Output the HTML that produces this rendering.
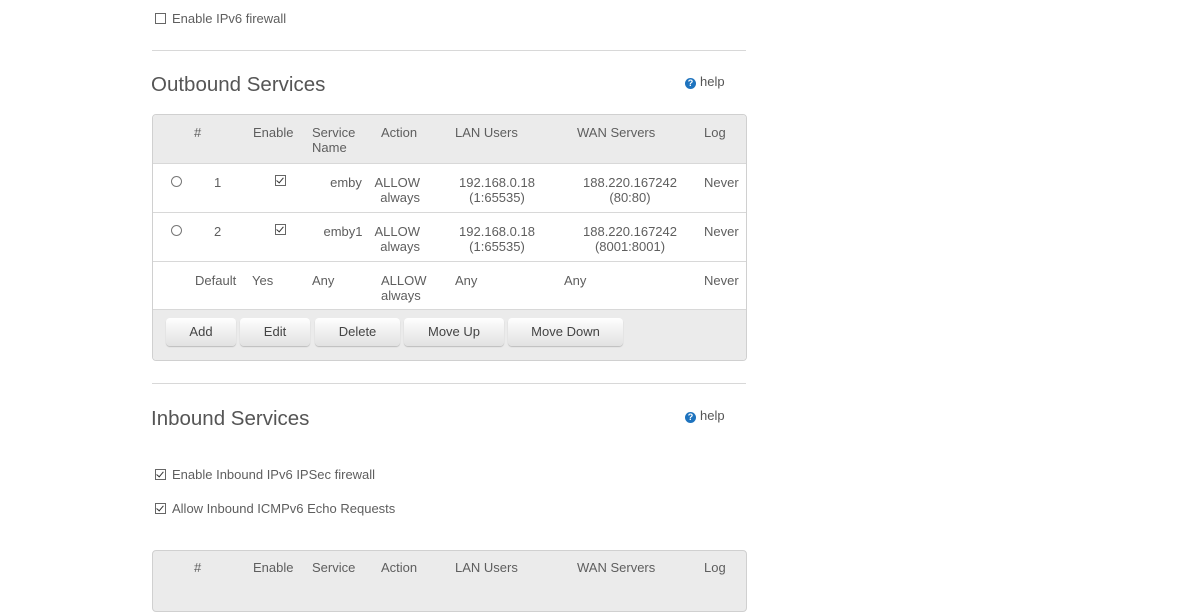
<!DOCTYPE html>
<html><head><style>
body{margin:0;width:1200px;height:573px;background:#fff;font-family:"Liberation Sans",sans-serif;color:#5e5e5e;font-size:13px;position:relative;overflow:hidden}
.t{position:absolute;white-space:nowrap;line-height:15px}
.c{text-align:center}
.r{text-align:right}
.hr{position:absolute;left:152px;width:594px;height:1px;background:#d8d8d8}
.h{position:absolute;font-size:20.5px;color:#555;white-space:nowrap}
.cb{position:absolute;width:9px;height:9px;border:1px solid #666;background:#fff}
.cb.k::after{content:"";position:absolute;left:2px;top:0px;width:3px;height:6px;border:solid #333;border-width:0 1.3px 1.3px 0;transform:rotate(40deg)}
.rd{position:absolute;width:9px;height:9px;border:1px solid #777;border-radius:50%}
.help{position:absolute;font-size:13px;color:#555}
.help i{display:inline-block;width:11px;height:11px;border-radius:50%;background:#1e73be;color:#fff;font-size:9px;font-style:normal;font-weight:bold;text-align:center;line-height:11px;margin-right:4px;vertical-align:0}
.box{position:absolute;left:152px;width:593px;border:1px solid #d0d0d0;border-radius:4px;overflow:hidden;background:#fff}
.gray{position:absolute;left:0;right:0;background:#ebebeb}
.line{position:absolute;left:0;right:0;height:1px;background:#d8d8d8}
.btn{position:absolute;top:318px;height:28px;border-radius:4px;background:linear-gradient(#fff,#f2f2f2 40%,#e2e2e2);box-shadow:0 1px 1px #bbb;font-size:13px;color:#444;text-align:center;line-height:28px}
</style></head><body>

<div class="cb" style="left:155px;top:13px"></div>
<span class="t" style="left:172px;top:11px">Enable IPv6 firewall</span>
<div class="hr" style="top:50px"></div>

<div class="h" style="left:151px;top:73px">Outbound Services</div>
<div class="help" style="left:685px;top:74px"><i>?</i>help</div>

<div class="box" style="top:114px;height:245px">
  <div class="gray" style="top:0;height:48px"></div>
  <div class="line" style="top:48px"></div>
  <div class="line" style="top:97px"></div>
  <div class="line" style="top:146px"></div>
  <div class="gray" style="top:194px;height:52px;border-top:1px solid #d8d8d8"></div>
</div>

<span class="t" style="left:194px;top:125px">#</span>
<span class="t" style="left:253px;top:125px">Enable</span>
<span class="t" style="left:312px;top:125px">Service<br>Name</span>
<span class="t" style="left:381px;top:125px">Action</span>
<span class="t" style="left:455px;top:125px">LAN Users</span>
<span class="t" style="left:577px;top:125px">WAN Servers</span>
<span class="t" style="left:704px;top:125px">Log</span>

<div class="rd" style="left:171px;top:176px"></div>
<span class="t" style="left:214px;top:175px">1</span>
<div class="cb k" style="left:275px;top:175px"></div>
<span class="t c" style="left:316px;width:60px;top:175px">emby</span>
<span class="t r" style="left:360px;width:60px;top:175px">ALLOW<br>always</span>
<span class="t c" style="left:447px;width:100px;top:175px">192.168.0.18<br>(1:65535)</span>
<span class="t c" style="left:570px;width:120px;top:175px">188.220.167242<br>(80:80)</span>
<span class="t" style="left:704px;top:175px">Never</span>

<div class="rd" style="left:171px;top:225px"></div>
<span class="t" style="left:214px;top:224px">2</span>
<div class="cb k" style="left:275px;top:224px"></div>
<span class="t c" style="left:313px;width:60px;top:224px">emby1</span>
<span class="t r" style="left:360px;width:60px;top:224px">ALLOW<br>always</span>
<span class="t c" style="left:447px;width:100px;top:224px">192.168.0.18<br>(1:65535)</span>
<span class="t c" style="left:570px;width:120px;top:224px">188.220.167242<br>(8001:8001)</span>
<span class="t" style="left:704px;top:224px">Never</span>

<span class="t" style="left:195px;top:273px">Default</span>
<span class="t" style="left:252px;top:273px">Yes</span>
<span class="t" style="left:312px;top:273px">Any</span>
<span class="t" style="left:381px;top:273px">ALLOW<br>always</span>
<span class="t" style="left:455px;top:273px">Any</span>
<span class="t" style="left:564px;top:273px">Any</span>
<span class="t" style="left:704px;top:273px">Never</span>

<div class="btn" style="left:166px;width:70px">Add</div>
<div class="btn" style="left:240px;width:70px">Edit</div>
<div class="btn" style="left:315px;width:85px">Delete</div>
<div class="btn" style="left:404px;width:100px">Move Up</div>
<div class="btn" style="left:508px;width:115px">Move Down</div>

<div class="hr" style="top:383px"></div>

<div class="h" style="left:151px;top:407px">Inbound Services</div>
<div class="help" style="left:685px;top:408px"><i>?</i>help</div>

<div class="cb k" style="left:155px;top:469px"></div>
<span class="t" style="left:172px;top:467px">Enable Inbound IPv6 IPSec firewall</span>
<div class="cb k" style="left:155px;top:503px"></div>
<span class="t" style="left:172px;top:501px">Allow Inbound ICMPv6 Echo Requests</span>

<div class="box" style="top:550px;height:60px;background:#ebebeb"></div>
<span class="t" style="left:194px;top:560px">#</span>
<span class="t" style="left:253px;top:560px">Enable</span>
<span class="t" style="left:312px;top:560px">Service</span>
<span class="t" style="left:381px;top:560px">Action</span>
<span class="t" style="left:455px;top:560px">LAN Users</span>
<span class="t" style="left:577px;top:560px">WAN Servers</span>
<span class="t" style="left:704px;top:560px">Log</span>
</body></html>
